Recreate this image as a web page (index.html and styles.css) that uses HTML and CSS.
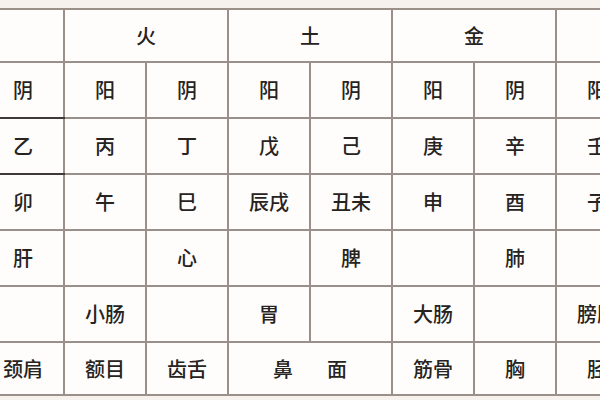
FILE: index.html
```html
<!DOCTYPE html>
<html lang="zh">
<head>
<meta charset="utf-8">
<link rel="stylesheet" href="styles.css">
</head>
<body>
<div class="frame">
<table class="wx">
  <tr class="r-head">
    <td colspan="2">木</td>
    <td colspan="2">火</td>
    <td colspan="2">土</td>
    <td colspan="2">金</td>
    <td colspan="2">水</td>
  </tr>
  <tr>
    <td>阳</td><td class="dark">阴</td>
    <td>阳</td><td>阴</td>
    <td>阳</td><td>阴</td>
    <td>阳</td><td>阴</td>
    <td>阳</td><td>阴</td>
  </tr>
  <tr>
    <td>甲</td><td class="dark">乙</td>
    <td>丙</td><td>丁</td>
    <td>戊</td><td>己</td>
    <td>庚</td><td>辛</td>
    <td>壬</td><td>癸</td>
  </tr>
  <tr>
    <td>寅</td><td>卯</td>
    <td>午</td><td>巳</td>
    <td>辰戌</td><td>丑未</td>
    <td>申</td><td>酉</td>
    <td>子</td><td>亥</td>
  </tr>
  <tr>
    <td></td><td>肝</td>
    <td></td><td>心</td>
    <td></td><td>脾</td>
    <td></td><td>肺</td>
    <td></td><td>肾</td>
  </tr>
  <tr>
    <td>胆</td><td></td>
    <td>小肠</td><td></td>
    <td>胃</td><td></td>
    <td>大肠</td><td></td>
    <td>膀胱</td><td></td>
  </tr>
  <tr class="r-last">
    <td>头</td><td>颈肩</td>
    <td>额目</td><td>齿舌</td>
    <td colspan="2"><span class="gap">鼻</span>面</td>
    <td>筋骨</td><td>胸</td>
    <td>胫</td><td>足</td>
  </tr>
</table>
</div>
</body>
</html>
```

FILE: styles.css
```css
html, body {
  margin: 0;
  padding: 0;
  width: 600px;
  height: 400px;
  overflow: hidden;
  background: #f6f1ec;
}

.frame {
  width: 600px;
  height: 400px;
  overflow: hidden;
  padding-top: 8px;
  box-sizing: border-box;
}

.wx {
  margin-left: -101px;
  border-collapse: collapse;
  table-layout: fixed;
  width: 822px;
  background: #fefdfc;
  font-family: "Noto Sans CJK SC", "Noto Sans CJK JP", sans-serif;
  font-size: 20px;
  font-weight: 500;
  color: #262321;
}

.wx td {
  width: 82px;
  height: 54px;
  padding: 0;
  border: 2px solid #9b9089;
  text-align: center;
  vertical-align: middle;
  line-height: 1;
  white-space: nowrap;
}

.r-head td {
  height: 51px;
}

.r-last td {
  height: 51px;
}

.wx td.dark {
  border-bottom-color: #3d3a38;
}

.gap {
  margin-right: 34px;
}
```
